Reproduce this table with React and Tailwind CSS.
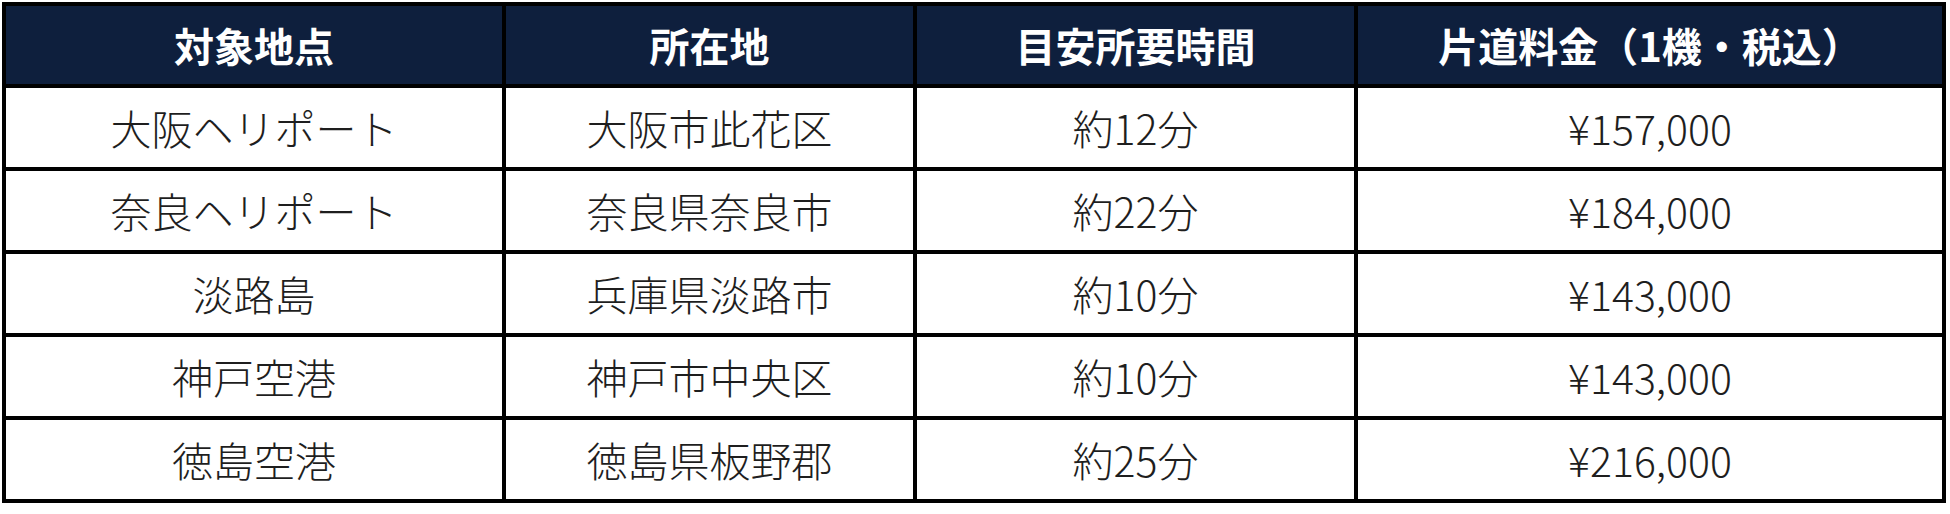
const cols = ['対象地点', '所在地', '目安所要時間', '片道料金（1機・税込）']

const rows = [
  ['大阪ヘリポート', '大阪市此花区', '約12分', '¥157,000'],
  ['奈良ヘリポート', '奈良県奈良市', '約22分', '¥184,000'],
  ['淡路島', '兵庫県淡路市', '約10分', '¥143,000'],
  ['神戸空港', '神戸市中央区', '約10分', '¥143,000'],
  ['徳島空港', '徳島県板野郡', '約25分', '¥216,000'],
]

export default function App() {
  return (
    <div className="h-[514px] w-[1950px] bg-white pl-[2px] pt-[2px]" style={{ fontFamily: '"Noto Sans CJK JP", "Noto Sans", sans-serif' }}>
      <div className="grid w-[1944px] grid-cols-[496px_407px_437px_584px] gap-[4px] bg-black p-[4px]">
        {cols.map((c) => (
          <div key={c} className="flex h-[78px] items-center justify-center bg-[#0e1f3d] text-[40px] font-bold text-white">
            {c}
          </div>
        ))}
        {rows.map((r, i) =>
          r.map((v, j) => (
            <div key={i + '-' + j} className="flex h-[79px] items-center justify-center bg-white text-[41px] font-light text-[#1e1e1e]">
              {v}
            </div>
          ))
        )}
      </div>
    </div>
  )
}
